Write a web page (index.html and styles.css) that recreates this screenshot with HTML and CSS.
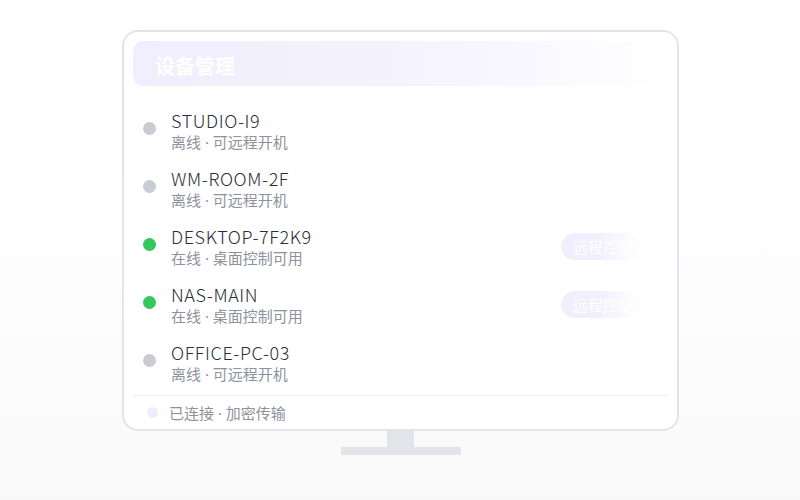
FILE: index.html
```html
<!DOCTYPE html>
<html lang="zh-CN">
<head>
    <meta charset="UTF-8">
    <meta name="viewport" content="width=device-width, initial-scale=1.0">
    <title>设备管理</title>
    <link rel="stylesheet" href="styles.css">
</head>
<body>
    <div class="scene">
        <div class="monitor">
            <div class="header">设备管理</div>
            <div class="devices">
                <div class="device">
                    <span class="dot off"></span>
                    <div class="info">
                        <div class="name">STUDIO-I9</div>
                        <div class="status">离线 · 可远程开机</div>
                    </div>
                </div>
                <div class="device">
                    <span class="dot off"></span>
                    <div class="info">
                        <div class="name">WM-ROOM-2F</div>
                        <div class="status">离线 · 可远程开机</div>
                    </div>
                </div>
                <div class="device">
                    <span class="dot on"></span>
                    <div class="info">
                        <div class="name">DESKTOP-7F2K9</div>
                        <div class="status">在线 · 桌面控制可用</div>
                    </div>
                    <button class="control">远程控制</button>
                </div>
                <div class="device">
                    <span class="dot on"></span>
                    <div class="info">
                        <div class="name">NAS-MAIN</div>
                        <div class="status">在线 · 桌面控制可用</div>
                    </div>
                    <button class="control">远程控制</button>
                </div>
                <div class="device">
                    <span class="dot off"></span>
                    <div class="info">
                        <div class="name">OFFICE-PC-03</div>
                        <div class="status">离线 · 可远程开机</div>
                    </div>
                </div>
            </div>
            <div class="footer">
                <span class="footer-dot"></span>
                已连接 · 加密传输
            </div>
        </div>
        <div class="neck"></div>
        <div class="base"></div>
    </div>
</body>
</html>
```

FILE: styles.css
```css
html, body {
    margin: 0;
    height: 100%;
}
body {
    background: linear-gradient(#ffffff 35%, #f9f9fa 100%);
    font-family: "Noto Sans CJK SC", sans-serif;
}
.scene {
    display: flex;
    flex-direction: column;
    align-items: center;
    padding-top: 30px;
    padding-left: 1px;
}
.monitor {
    box-sizing: border-box;
    width: 557px;
    height: 401px;
    border: 2px solid #e1e4e8;
    border-radius: 16px;
    background: #ffffff;
    padding: 9px 9px 0 9px;
    display: flex;
    flex-direction: column;
}
.header {
    box-sizing: border-box;
    height: 45px;
    border-radius: 10px;
    background: linear-gradient(90deg, #f0edfd 0%, #f6f4fe 60%, rgba(255, 255, 255, 0) 100%);
    color: #ffffff;
    font-size: 20px;
    font-weight: 700;
    line-height: 45px;
    padding: 2px 0 0 22px;
}
.devices {
    display: flex;
    flex-direction: column;
    gap: 14px;
    padding: 23px 0 10px 10px;
    border-bottom: 1px solid #eceef1;
}
.device {
    display: flex;
    align-items: center;
    height: 44px;
}
.dot {
    width: 13px;
    height: 13px;
    border-radius: 50%;
    margin-right: 15px;
    margin-top: -5px;
    flex-shrink: 0;
}
.dot.off {
    background: #c9ccd3;
}
.dot.on {
    background: #34c759;
}
.info {
    flex: 1;
}
.name {
    font-size: 18px;
    font-weight: 300;
    line-height: 23px;
    color: #2b2e36;
    letter-spacing: 0.6px;
}
.status {
    font-family: "Noto Sans", "Noto Sans CJK SC", sans-serif;
    font-size: 15px;
    line-height: 21px;
    color: #8d929b;
}
.control {
    width: 80px;
    height: 27px;
    margin-right: 27px;
    margin-top: -2px;
    border: none;
    border-radius: 14px;
    background: #f1eefd;
    color: #ffffff;
    font-family: serif;
    font-size: 15px;
    text-align: left;
    padding-left: 12px;
    -webkit-mask-image: linear-gradient(90deg, #000 45%, transparent 100%);
    mask-image: linear-gradient(90deg, #000 45%, transparent 100%);
}
.footer {
    flex: 1;
    display: flex;
    align-items: center;
    gap: 11px;
    padding-left: 14px;
    font-family: "Noto Sans", "Noto Sans CJK SC", sans-serif;
    font-size: 15px;
    color: #8d929b;
}
.footer-dot {
    width: 11px;
    height: 11px;
    border-radius: 50%;
    background: #efecfd;
}
.neck {
    width: 27px;
    height: 16px;
    background: #e1e4e8;
}
.base {
    width: 120px;
    height: 8px;
    background: #e1e4e8;
}
```
